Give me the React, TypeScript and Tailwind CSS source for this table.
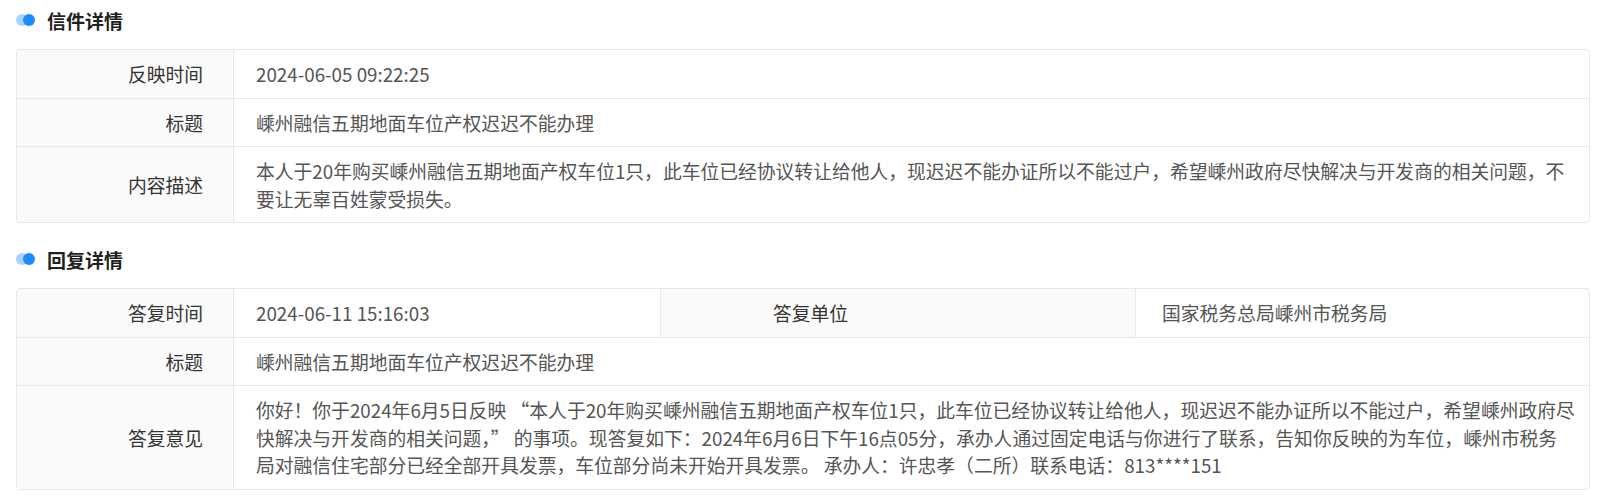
import React from "react";

const font = {
  fontFamily: '"Noto Sans CJK SC", "Noto Sans", sans-serif',
};

function Header({ title }: { title: string }) {
  return (
    <div className="flex h-[40px] items-center">
      <div className="relative h-[12px] w-[20px]">
        <span className="absolute left-0 top-0 h-[12px] w-[12px] rounded-full bg-[#a8d2ff]" />
        <span className="absolute left-[7px] top-0 h-[12px] w-[12px] rounded-full bg-[#1a8cff]" />
      </div>
      <span className="ml-[11px] text-[19px] font-bold leading-[27px] text-[#1f1f1f]">{title}</span>
    </div>
  );
}

function Label({ children, className = "" }: { children: React.ReactNode; className?: string }) {
  return (
    <div
      className={
        "flex items-center justify-end border-r border-[#e8e8e8] bg-[#fafafa] py-[10px] pr-[30px] text-[#333] " +
        className
      }
    >
      {children}
    </div>
  );
}

function Value({ children, className = "" }: { children: React.ReactNode; className?: string }) {
  return <div className={"flex items-center py-[10px] text-[#555] " + className}>{children}</div>;
}

export default function App() {
  return (
    <div className="bg-white pl-4 pr-[25px] text-[18.8px] leading-[27.5px]" style={font}>
      <Header title="信件详情" />
      <div className="mt-[9px] overflow-hidden rounded-[4px] border border-[#e8e8e8]">
        <div className="flex">
          <Label className="w-[217px]">反映时间</Label>
          <Value className="flex-1 pl-[22px] pr-[24px]">2024-06-05 09:22:25</Value>
        </div>
        <div className="flex border-t border-[#e8e8e8]">
          <Label className="w-[217px]">标题</Label>
          <Value className="flex-1 pl-[22px] pr-[24px]">嵊州融信五期地面车位产权迟迟不能办理</Value>
        </div>
        <div className="flex border-t border-[#e8e8e8]">
          <Label className="w-[217px]">内容描述</Label>
          <Value className="flex-1 pl-[22px] pr-[24px]">
            <p>
              本人于20年购买嵊州融信五期地面产权车位1只，此车位已经协议转让给他人，现迟迟不能办证所以不能过户，希望嵊州政府尽快解决与开发商的相关问题，不要让无辜百姓蒙受损失。
            </p>
          </Value>
        </div>
      </div>

      <div className="mt-[16px]">
        <Header title="回复详情" />
      </div>
      <div className="mt-[9px] overflow-hidden rounded-[4px] border border-[#e8e8e8]">
        <div className="flex">
          <Label className="w-[217px]">答复时间</Label>
          <Value className="w-[427px] border-r border-[#e8e8e8] pl-[22px] pr-[24px]">2024-06-11 15:16:03</Value>
          <div className="flex w-[475px] items-center border-r border-[#e8e8e8] bg-[#fafafa] py-[10px] pl-[112px] text-[#333]">
            答复单位
          </div>
          <Value className="flex-1 pl-[26px] pr-[24px]">国家税务总局嵊州市税务局</Value>
        </div>
        <div className="flex border-t border-[#e8e8e8]">
          <Label className="w-[217px]">标题</Label>
          <Value className="flex-1 pl-[22px] pr-[24px]">嵊州融信五期地面车位产权迟迟不能办理</Value>
        </div>
        <div className="flex border-t border-[#e8e8e8]">
          <Label className="w-[217px]">答复意见</Label>
          <Value className="flex-1 pl-[22px] pr-[4px]">
            <p>
              你好！你于2024年6月5日反映 “本人于20年购买嵊州融信五期地面产权车位1只，此车位已经协议转让给他人，现迟迟不能办证所以不能过户，希望嵊州政府尽快解决与开发商的相关问题，” 的事项。现答复如下：2024年6月6日下午16点05分，承办人通过固定电话与你进行了联系，告知你反映的为车位，嵊州市税务
              <br />
              局对融信住宅部分已经全部开具发票，车位部分尚未开始开具发票。 承办人：许忠孝（二所）联系电话：813****151
            </p>
          </Value>
        </div>
      </div>
    </div>
  );
}
